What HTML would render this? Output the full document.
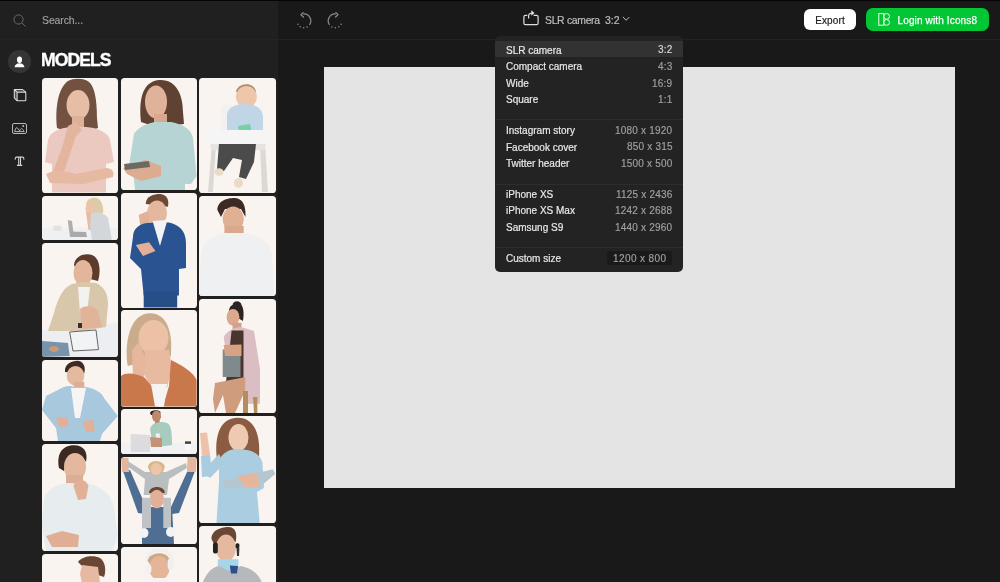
<!DOCTYPE html>
<html><head><meta charset="utf-8">
<style>
*{margin:0;padding:0;box-sizing:border-box}
html,body{width:1000px;height:582px;overflow:hidden;background:#191919;font-family:"Liberation Sans",sans-serif}
.abs,.row span{will-change:transform}
.abs{position:absolute}
#topstrip{left:0;top:0;width:1000px;height:1px;background:#050505}
#side{left:0;top:1px;width:278px;height:581px;background:#202020}
#hline{left:0;top:39px;width:1000px;height:1px;background:#232323}
#search{left:42px;top:14px;font-size:10.5px;color:#a0a0a0;letter-spacing:-0.12px;-webkit-text-stroke:0.15px #a0a0a0}
#models{left:41px;top:50px;font-size:17.6px;font-weight:bold;color:#fff;letter-spacing:-0.95px;-webkit-text-stroke:0.35px #fff}
#canvas{left:324px;top:67px;width:631px;height:420.5px;background:#e4e4e4}
.card{position:absolute;background:#f9f4ef;border-radius:3.6px;overflow:hidden}
.btn-export{left:804px;top:9px;width:52px;height:21px;background:#fff;border-radius:6px;color:#1c1c1c;font-size:10px;text-align:center;line-height:23px;letter-spacing:0.12px;-webkit-text-stroke:0.2px #1c1c1c}
.btn-login{left:866px;top:8px;width:123px;height:23px;background:#03c634;border-radius:7px;color:#fff;font-size:10px;line-height:25px;letter-spacing:0.14px;-webkit-text-stroke:0.25px #fff}
#slr{left:545px;top:14.6px;font-size:10.4px;color:#bdbdbd;letter-spacing:-0.3px;word-spacing:0px;-webkit-text-stroke:0.2px #bdbdbd}
#dd{left:495px;top:36px;width:188px;height:235.5px;background:#232323;border-radius:5px}
.row{position:absolute;left:0;width:188px;height:16.5px;font-size:10px;color:#e8e8e8}
.row .l{position:absolute;left:11.3px;top:3.6px;-webkit-text-stroke:0.2px #e8e8e8}
.row .r{position:absolute;right:10.5px;top:3.4px;color:#a0a0a0;letter-spacing:0.2px;-webkit-text-stroke:0.15px #a0a0a0}
.sep{position:absolute;left:0;width:188px;height:1px;background:#2d2d2d}
</style></head><body>
<div id="topstrip" class="abs"></div>
<div id="side" class="abs"></div>
<div id="hline" class="abs"></div>
<div id="canvas" class="abs"></div>

<!-- search -->
<svg class="abs" style="left:12.3px;top:12.8px" width="16" height="16" viewBox="0 0 16 16"><circle cx="6.5" cy="6.5" r="4.6" fill="none" stroke="#6a6a6a" stroke-width="1"/><line x1="9.8" y1="9.8" x2="13.5" y2="13.5" stroke="#6a6a6a" stroke-width="1"/></svg>
<div id="search" class="abs">Search...</div>

<!-- sidebar icons -->
<div class="abs" style="left:8px;top:50px;width:22.5px;height:22.5px;border-radius:50%;background:#353535"></div>
<svg class="abs" style="left:12px;top:55px" width="15" height="15" viewBox="0 0 15 15"><ellipse cx="7.5" cy="4.7" rx="2.5" ry="3.3" fill="#fff"/><path d="M2.6 12.3 C2.6 10 4.6 8.3 7.5 8.3 C10.4 8.3 12.4 10 12.4 12.3 Z" fill="#fff"/></svg>
<svg class="abs" style="left:12px;top:87px" width="16" height="16" viewBox="0 0 16 16" fill="none" stroke="#dcdcdc" stroke-width="1.05" stroke-linejoin="round"><path d="M2.3 2.6 L5.1 5.1 V13.8 L2.3 10.9 Z" fill="rgba(200,200,200,0.3)" stroke="none"/><rect x="5.1" y="5.1" width="8.7" height="8.7" rx="0.9"/><path d="M5.1 5.1 L2.3 2.6 H10.6 L13.8 5.1 M2.3 2.6 V10.9 L5.1 13.8"/></svg>
<svg class="abs" style="left:11px;top:122px" width="17" height="13" viewBox="0 0 17 13" fill="none" stroke="#b8b8b8" stroke-width="1"><rect x="1.5" y="1.5" width="14" height="10" rx="1.5"/><path d="M3.6 9.6 C4.2 7.6 5 5.6 5.7 5.6 C6.6 5.6 7.8 7.8 8.6 8.8 C9.3 7.4 10 6.5 10.5 6.5 C11.3 6.5 12.6 8.6 13.2 9.6 Z" stroke-linejoin="round"/><circle cx="12.2" cy="4" r="1" fill="#b8b8b8" stroke="none"/></svg>
<svg class="abs" style="left:13px;top:155px" width="13" height="13" viewBox="0 0 13 13" fill="none" stroke="#d4d4d4" stroke-width="1.1" stroke-linecap="round"><path d="M2.2 4.3 C2.2 3 2.5 2.1 3.2 2.1 H9.9 C10.6 2.1 10.9 3 10.9 4.3"/><path d="M5.7 2.4 V10.1 M7.5 2.4 V10.1 M4.4 10.4 H8.8"/></svg>

<div id="models" class="abs">MODELS</div>

<!-- header center -->
<svg class="abs" style="left:296.3px;top:11.8px" width="18" height="18" viewBox="0 0 18 18" fill="none" stroke="#8c8c8c" stroke-width="1.25"><path d="M7.30 2.03 A6.9 6.9 0 0 1 13.48 12.96" fill="none"/><path d="M7.1 0.7 L4.9 2.6 L7.4 5.0" fill="none" stroke-linejoin="round" stroke-linecap="round"/><g fill="#8c8c8c" stroke="none"><circle cx="11.14" cy="14.99" r="0.75"/><circle cx="7.66" cy="15.80" r="0.75"/><circle cx="4.24" cy="14.75" r="0.75"/><circle cx="1.92" cy="12.35" r="0.75"/></g></svg>
<svg class="abs" style="left:324.6px;top:11.8px;transform:scaleX(-1)" width="18" height="18" viewBox="0 0 18 18" fill="none" stroke="#8c8c8c" stroke-width="1.25"><path d="M7.30 2.03 A6.9 6.9 0 0 1 13.48 12.96" fill="none"/><path d="M7.1 0.7 L4.9 2.6 L7.4 5.0" fill="none" stroke-linejoin="round" stroke-linecap="round"/><g fill="#8c8c8c" stroke="none"><circle cx="11.14" cy="14.99" r="0.75"/><circle cx="7.66" cy="15.80" r="0.75"/><circle cx="4.24" cy="14.75" r="0.75"/><circle cx="1.92" cy="12.35" r="0.75"/></g></svg>

<svg class="abs" style="left:518px;top:6px" width="26" height="24" viewBox="0 0 26 24" fill="none" stroke="#dedede" stroke-width="1.2"><path d="M9.3 9.4 H7.4 a1.5 1.5 0 0 0 -1.5 1.5 V17.2 a1.5 1.5 0 0 0 1.5 1.5 H18.6 a1.5 1.5 0 0 0 1.5 -1.5 V10.9 a1.5 1.5 0 0 0 -1.5 -1.5 H15.6"/><path d="M10.6 12.6 V10.2 C10.6 8 12 7 14.6 7"/><path d="M13.6 4.8 L16.2 7 L13.6 9.2 Z" fill="#dedede" stroke-width="0.6"/></svg>
<div id="slr" class="abs">SLR camera</div><div class="abs" style="left:605px;top:14.4px;font-size:10.5px;color:#bdbdbd;-webkit-text-stroke:0.2px #bdbdbd">3:2</div>
<svg class="abs" style="left:620px;top:14px" width="12" height="9" viewBox="0 0 12 9" fill="none" stroke="#bdbdbd" stroke-width="1"><path d="M2.9 2.9 L6.1 6.3 L9.3 3.1"/></svg>

<div class="abs btn-export">Export</div>
<div class="abs btn-login"><svg style="position:absolute;left:11px;top:4px" width="16" height="15" viewBox="0 0 16 15" fill="none" stroke="#e8ffe8" stroke-width="1"><rect x="1.8" y="1.6" width="5" height="11.6"/><circle cx="9.6" cy="4.4" r="2.9"/><circle cx="9.6" cy="10.4" r="2.9"/></svg><span style="position:absolute;left:31.5px;top:0">Login with Icons8</span></div>

<!-- dropdown -->
<div id="dd" class="abs">
  <div class="row" style="top:5px;height:16.4px;background:#323232"><span class="l">SLR camera</span><span class="r" style="color:#d8d8d8;-webkit-text-stroke:0.15px #d8d8d8">3:2</span></div>
  <div class="row" style="top:21.6px"><span class="l">Compact camera</span><span class="r">4:3</span></div>
  <div class="row" style="top:38.2px"><span class="l">Wide</span><span class="r">16:9</span></div>
  <div class="row" style="top:54.8px"><span class="l">Square</span><span class="r">1:1</span></div>
  <div class="sep" style="top:83px"></div>
  <div class="row" style="top:85.5px"><span class="l">Instagram story</span><span class="r">1080 x 1920</span></div>
  <div class="row" style="top:102.1px"><span class="l">Facebook cover</span><span class="r">850 x 315</span></div>
  <div class="row" style="top:118.7px"><span class="l">Twitter header</span><span class="r">1500 x 500</span></div>
  <div class="sep" style="top:147.5px"></div>
  <div class="row" style="top:149.3px"><span class="l">iPhone XS</span><span class="r">1125 x 2436</span></div>
  <div class="row" style="top:165.9px"><span class="l">iPhone XS Max</span><span class="r">1242 x 2688</span></div>
  <div class="row" style="top:182.5px"><span class="l">Samsung S9</span><span class="r">1440 x 2960</span></div>
  <div class="sep" style="top:211px"></div>
  <div class="abs" style="left:112px;top:215px;width:64.5px;height:13.5px;background:#1a1a1a;border-radius:2px"></div>
  <div class="row" style="top:213.3px"><span class="l">Custom size</span><span class="r" style="right:16.7px;letter-spacing:0.4px">1200 x 800</span></div>
</div>

<!-- cards -->
<svg width="0" height="0" style="position:absolute"><defs><filter id="bl" x="-5%" y="-5%" width="110%" height="110%"><feGaussianBlur stdDeviation="0.45"/></filter></defs></svg>
<svg class="card" style="left:42px;top:78px" width="75.8" height="114.6" viewBox="0 0 75.8 114.6"><g filter="url(#bl)"><path d="M15 50 C13 30 16 10 26 3 C32 0 42 0 47 4 C54 10 55 28 55 40 L56 50 L44 54 L26 54 Z" fill="#72513f"/>
<ellipse cx="36" cy="27" rx="11.5" ry="15" fill="#e6bea6"/>
<rect x="30" y="38" width="12" height="14" fill="#ddb198"/>
<path d="M6 62 C8 54 16 50 30 49 L44 49 C56 50 66 54 68 62 L72 84 L64 86 L64 114.6 L10 114.6 L10 86 L3 84 Z" fill="#ecc9c0"/>
<path d="M10 96 L22 94 L34 58 L40 52 L34 44 L26 48 L20 70 Z" fill="#e3b59e"/>
<path d="M4 96 C10 92 22 92 34 96 L64 90 C70 90 73 94 71 99 L42 106 L8 105 Z" fill="#e5b9a2"/></g></svg>
<svg class="card" style="left:121px;top:78px" width="75.6" height="112" viewBox="0 0 75.6 112"><g filter="url(#bl)"><path d="M20 44 C18 24 20 4 38 2 C56 1 62 18 62 34 L63 46 L46 48 L26 46 Z" fill="#5f4232"/>
<ellipse cx="35" cy="24" rx="11" ry="16.5" fill="#e0b29a"/>
<rect x="33" y="36" width="13" height="12" fill="#d8a990"/>
<path d="M13 56 C18 48 28 45 34 44 L50 44 C60 46 70 50 72 60 L75.6 98 L70 106 L64 106 L64 112 L14 112 L12 92 L8 88 Z" fill="#b6d4d3"/>
<path d="M2 90 L24 82 L40 88 L40 98 L20 103 L6 96 Z" fill="#dcab90"/>
<path d="M3 86 L28 83 L29 89 L4 92 Z" fill="#6c6762"/></g></svg>
<svg class="card" style="left:199.3px;top:78px" width="76.7" height="114.6" viewBox="0 0 76.7 114.6"><g filter="url(#bl)"><path d="M9 114 L13 66 L17 66 L14 114 Z" fill="#dcd8d4"/>
<path d="M63 114 L61 66 L66 66 L69 114 Z" fill="#dcd8d4"/>
<path d="M22 30 C24 25 30 25 33 28 L36 54 L22 54 Z" fill="#f1f1f2"/>
<path d="M37 14 C38 4 56 3 57 14 Z" fill="#b08b6b"/>
<ellipse cx="47.4" cy="19" rx="10.5" ry="11" fill="#eec6aa"/>
<path d="M28 36 C30 28 38 26 47 26 C56 26 63 30 64 38 L64 56 L28 56 Z" fill="#c0d5e6"/>
<path d="M39 48 L51 46 L53 57 L41 58 Z" fill="#74cfa8"/>
<path d="M11 64 L67 64 L66 72 L12 72 Z" fill="#e6e4e2"/>
<path d="M7 52 L70 52 L70 66 L7 66 Z" fill="#f5f5f6"/>
<path d="M20 66 L57 66 L55 84 L47 101 L40 99 L43 82 L34 80 L25 93 L18 91 Z" fill="#4b4b4b"/>
<ellipse cx="20" cy="94" rx="4.5" ry="3.8" fill="#eadbc8"/>
<ellipse cx="39.5" cy="105" rx="4.5" ry="5" fill="#eadbc8"/></g></svg>
<svg class="card" style="left:42px;top:195.7px" width="75.8" height="44.8" viewBox="0 0 75.8 44.8"><g filter="url(#bl)"><rect x="0" y="31.6" width="75.8" height="13.2" fill="#eff0f1"/>
<path d="M44 9 C44 3 50 1 55 2 C60 4 62 12 61 17 L50 17 Z" fill="#dccaa8"/>
<ellipse cx="47.5" cy="13" rx="4" ry="6" fill="#ebc4aa"/>
<path d="M44 16 L49.5 17 L51 34 L46.5 34 Z" fill="#e6bba0"/>
<path d="M49 18 C54 15 62 16 66 22 L70 44.8 L50 44.8 L48 30 Z" fill="#d3d7db"/>
<path d="M25.7 24 L30 25 L32 41 L28 41 Z" fill="#aeaeb0"/>
<path d="M28.4 35.5 L44 36 L45 41 L29 41 Z" fill="#a9a9ab"/>
<rect x="11.5" y="29.6" width="8" height="5.2" fill="#e2e2e2"/></g></svg>
<svg class="card" style="left:42px;top:243px" width="75.8" height="114" viewBox="0 0 75.8 114"><g filter="url(#bl)"><path d="M0 87 L75.8 80 L75.8 114 L0 114 Z" fill="#eceef1"/>
<path d="M32 22 C33 12 44 10 50 12 C58 15 59 28 56 38 L48 36 L36 30 Z" fill="#5b3b2b"/>
<ellipse cx="41" cy="30" rx="9.5" ry="13" fill="#e3b69b"/>
<path d="M6 88 L12 70 C16 54 22 44 30 41 L40 39 L54 40 C62 44 66 50 66 62 L64 84 L40 88 Z" fill="#d9c7ab"/>
<path d="M36 44 L48 44 L45 70 L38 70 Z" fill="#f4f2ef"/>
<path d="M38 66 C42 62 52 62 56 68 L60 84 L40 86 Z" fill="#e1b499"/>
<rect x="36" y="80" width="4" height="5" fill="#333"/>
<path d="M27.7 89 L54 87 L56.5 106.6 L31 108 Z" fill="#f2f3f5" stroke="#55575a" stroke-width="0.9"/>
<path d="M0 98 L26 100 L27.7 113 L0 114 Z" fill="#7893aa"/>
<ellipse cx="12" cy="106" rx="5" ry="3" fill="#c79a78"/></g></svg>
<svg class="card" style="left:42px;top:359.8px" width="75.8" height="81" viewBox="0 0 75.8 81"><g filter="url(#bl)"><path d="M23 12 C22 4 30 0.6 36 0.8 C42 1.5 44 8 42 14 Z" fill="#3d2a22"/>
<ellipse cx="33.5" cy="15.8" rx="8.8" ry="9.8" fill="#e5b9a0"/>
<rect x="31.7" y="21.8" width="10.6" height="9.8" fill="#dcae95"/>
<path d="M16 30 C22 26 28 25 32 27 L44 27 C54 29 60 33 62 38 L75.8 56 L60 74 L58 81 L16 81 L14 68 L0 50 L4 36 Z" fill="#a7c8dd"/>
<path d="M29 28 L44 28 L38 58 L33 58 Z" fill="#f6f5f3"/>
<path d="M14 58 L25 57 L27 66 L17 67 Z" fill="#e2b099"/>
<path d="M40 61 L51 60 L53 72 L44 72 Z" fill="#e2b099"/></g></svg>
<svg class="card" style="left:42px;top:443.6px" width="75.8" height="107.2" viewBox="0 0 75.8 107.2"><g filter="url(#bl)"><path d="M17 24 C14 8 22 1.3 32 1.3 C42 1.3 46 8 44 18 L40 12 L28 12 L22 27 Z" fill="#3b2921"/>
<ellipse cx="33" cy="23" rx="11" ry="14" fill="#e4b79f"/>
<rect x="24" y="31" width="17" height="11" fill="#dcae95"/>
<path d="M2 54 C6 44 16 40 26 39 L48 40 C60 44 70 50 72 64 L75.8 92 L70 107.2 L4 107.2 L0 80 Z" fill="#e7ecef"/>
<path d="M31.5 42 C34 34 44 34 46.4 42 L44 55 L36 56 Z" fill="#e2b097"/>
<path d="M4 92 L20 87 L37 91 L36 103 L10 103 Z" fill="#e0ae95"/></g></svg>
<svg class="card" style="left:42px;top:553.6px" width="75.8" height="40" viewBox="0 0 75.8 40"><g filter="url(#bl)"><path d="M36 8 C40 2 52 1 58 4 C64 8 64 18 62 23 L56 21 L40 12 Z" fill="#6b4636"/>
<path d="M40 11 L56 13 L58 29 L40 29 L38 20 Z" fill="#e6b9a3"/></g></svg>
<svg class="card" style="left:121px;top:193px" width="75.6" height="114.5" viewBox="0 0 75.6 114.5"><g filter="url(#bl)"><path d="M24.7 11 C25 3 33 1 39 1 C47 1.5 48 8 47 13.8 Z" fill="#6d4a35"/>
<ellipse cx="36" cy="20" rx="10" ry="12.5" fill="#e4b79f"/>
<path d="M17.7 22 L27 18 L29.6 35 L20 37.5 Z" fill="#e2b19a"/>
<path d="M12 44 C12 36 18 31 26 30 L34 29.6 L48 29.6 C58 32 65 38 65 50 L65 75 L58 76 L58 102.6 L22.7 102.6 L20 76 L9 65 Z" fill="#2b5391"/>
<path d="M31.6 28 L46.4 27 L39 53 Z" fill="#f3f3f3"/>
<rect x="22.7" y="98.6" width="33.5" height="15.9" fill="#27508a"/>
<path d="M14.8 52 L28 49.3 L34.5 58 L22 63 Z" fill="#e2b097"/></g></svg>
<svg class="card" style="left:121px;top:310px" width="75.6" height="96.5" viewBox="0 0 75.6 96.5"><g filter="url(#bl)"><path d="M6.7 56 C3 30 10 3.3 29 3.3 C46 3.3 52 22 50 45 L46 56 L30 50 Z" fill="#caac8d"/>
<ellipse cx="32.5" cy="27.5" rx="15" ry="17.5" fill="#ecc1a6"/>
<path d="M24 40 L48 40 L51 58 L46 78 L30 78 L22 62 Z" fill="#e8bba0"/>
<path d="M11 40 L18 32 L25 50 L23 68 L12 70 Z" fill="#e7b79d"/>
<path d="M0 66 C4 62 16 63 24 68 L32 78 L37 96.5 L0 96.5 Z" fill="#c8784c"/>
<path d="M42 96.5 L48 76 L50 50 C62 56 72 62 75.6 70 L75.6 96.5 Z" fill="#c8784c"/>
<path d="M30 74 L46 74 L43 96.5 L34 96.5 Z" fill="#f6f4f2"/></g></svg>
<svg class="card" style="left:121px;top:409px" width="75.6" height="45" viewBox="0 0 75.6 45"><g filter="url(#bl)"><rect x="0" y="34" width="75.6" height="11" fill="#f1f1f3"/>
<path d="M29 4 C29.5 0.4 38 0.4 39.5 3 L39 6 L30 6 Z" fill="#2b201c"/>
<ellipse cx="35.5" cy="7.2" rx="4.6" ry="5.6" fill="#bd8a6c"/>
<rect x="34" y="12" width="4.7" height="12" fill="#b98467"/>
<path d="M29 20 C31 13 40 12 46 14 C50 16 51 22 51 36 L44 37 L32 38 Z" fill="#a7cbbd"/>
<rect x="34.8" y="24.5" width="4" height="8.5" fill="#f3f3f3"/>
<path d="M29 28 L41 29 L41 38 L30 38 Z" fill="#c49276"/>
<path d="M9.5 25 L29 26 L29 43 L10 43 Z" fill="#dcdcde"/>
<rect x="64" y="33" width="6" height="7.3" fill="#f8f8f8"/>
<rect x="64" y="32.4" width="6" height="2.4" fill="#3a3a3a"/></g></svg>
<svg class="card" style="left:121px;top:457px" width="75.6" height="87" viewBox="0 0 75.6 87"><g filter="url(#bl)"><path d="M2 14 L9 13 L25 50 L24 57 L17 56 Z" fill="#4f6e93"/>
<path d="M74 14 L67 13 L50 50 L51 57 L58 56 Z" fill="#4f6e93"/>
<path d="M0 0.8 L7.5 0.8 L8 15 L1 15 Z" fill="#e6b59d"/>
<path d="M75.6 0 L66.5 0 L66 15 L75 15 Z" fill="#e6b59d"/>
<path d="M21 50 L51 50 L53 87 L21 87 Z" fill="#4f6e93"/>
<path d="M7.5 4.5 L24 15 L45 15 L65 6 L66 11 L48 22 L46 38 L22.7 38 L24 22 L6 9 Z" fill="#babebf"/>
<path d="M27 10 C27 2.3 43 2.3 43.8 10 L42 15 L29 15 Z" fill="#d8b688"/>
<ellipse cx="35.2" cy="12" rx="5.6" ry="6" fill="#edc4a6"/>
<path d="M28 36 C28 28 44 28 43.8 36 Z" fill="#6b4636"/>
<ellipse cx="35.8" cy="42" rx="7.2" ry="9.2" fill="#e2b097"/>
<path d="M21 40.8 L30 40.8 L30 71 L21 71 Z" fill="#c0c3c5"/>
<path d="M42.3 40.8 L50 40.8 L50 71 L42.3 71 Z" fill="#c0c3c5"/>
<ellipse cx="23" cy="76" rx="4.5" ry="5" fill="#f3f3f3"/>
<ellipse cx="49.7" cy="75" rx="4.7" ry="5" fill="#f3f3f3"/></g></svg>
<svg class="card" style="left:121px;top:547px" width="75.6" height="40" viewBox="0 0 75.6 40"><g filter="url(#bl)"><path d="M25 14 C25 4 33 1.5 38.7 1.5 C47 1.5 52.4 6 52.4 13 L49 13 C49 8 44 4.5 38.7 4.5 C32 4.5 28 9 28 15 Z" fill="#efefef"/>
<path d="M26.6 14 C28 5 46 3 48.6 13 L47 17 L29 17 Z" fill="#cba984"/>
<ellipse cx="38.3" cy="21" rx="10.2" ry="12" fill="#e4b596"/>
<path d="M26.6 31 L47 31 L47 40 L26.6 40 Z" fill="#f4f4f4"/>
<rect x="24.3" y="17.5" width="6.1" height="9.1" rx="3" fill="#f2f2f2"/>
<rect x="46.7" y="11.4" width="6.1" height="11.4" rx="3" fill="#f0f0f0"/></g></svg>
<svg class="card" style="left:199.3px;top:195.7px" width="76.7" height="100" viewBox="0 0 76.7 100"><g filter="url(#bl)"><path d="M18.4 14 C18.4 4 30 1.7 36 2 C44 2.5 47 10 46.5 21 L42 13 L26 13 L22 21 Z" fill="#3c2a22"/>
<ellipse cx="34.2" cy="23" rx="10.5" ry="12.5" fill="#dfb094"/>
<rect x="25.4" y="30" width="19.3" height="10" fill="#daa98d"/>
<path d="M2 58 C4 46 12 40 26 37 L46 37 C60 40 70 44 73 58 L75 100 L0 100 Z" fill="#eff0f1"/></g></svg>
<svg class="card" style="left:199.3px;top:298.7px" width="76.7" height="114.1" viewBox="0 0 76.7 114.1"><g filter="url(#bl)"><path d="M33.6 6 C34 1 42 1 42.5 6 C45 10 45 16 44 22 L30 14 C30 9 31 7 33.6 6 Z" fill="#2e2320"/>
<ellipse cx="34" cy="18.3" rx="6.4" ry="8.4" fill="#dba98d"/>
<rect x="33.6" y="23.7" width="8.9" height="9" fill="#d6a085"/>
<path d="M24.7 38 C28 32 36 28 42 28 L55 32 L61 70 L61 104.7 L46 104.7 L46 82 L30 72 Z" fill="#dbbdc4"/>
<path d="M32.6 31.6 L44.5 31.6 L44.5 83 L27 83 Z" fill="#4a352d"/>
<path d="M23.7 50.4 L41.5 50.4 L41.5 78 L23.7 78 Z" fill="#808a8c"/>
<path d="M24.7 46 L42.5 45.5 L42.5 57 L26 57 Z" fill="#d8a286"/>
<path d="M16 84 L46.4 78 L46 92 L36 114.1 L27 114.1 L24 96 L16 114.1 L14 100 Z" fill="#cf9d7d"/>
<path d="M44 92 L49 92 L49 114.1 L44 114.1 Z" fill="#b88b5d"/>
<path d="M54 98 L58.3 98 L58.3 114.1 L55 114.1 Z" fill="#b88b5d"/></g></svg>
<svg class="card" style="left:199.3px;top:416px" width="76.7" height="107" viewBox="0 0 76.7 107"><g filter="url(#bl)"><path d="M19 50 C14 22 20 1.8 39 1.8 C56 1.8 62 20 60 42 L60.7 55 L46 44 L28 52 Z" fill="#8b5c42"/>
<ellipse cx="39.5" cy="21.5" rx="10" ry="13.5" fill="#efcab3"/>
<path d="M20 44 C24 36 32 33 38 33 C50 33 60 36 63.4 46 L65 72 L58 76 L60.7 107 L17.5 107 L20 66 Z" fill="#aacde2"/>
<path d="M2 40 L11 38 L13 60 L3 61 Z" fill="#a9cce1"/>
<path d="M3 56 L20 38 L25 48 L11 62 Z" fill="#a9cce1"/>
<path d="M1 17 L8 16.5 L11 38 L3 40 Z" fill="#edc2a9"/>
<path d="M24 65 L74 53.3 L76.3 58 L62 70 L27 72.6 Z" fill="#b6c6cf"/>
<path d="M38.6 60 L58 57 L60.7 71.7 L46 71 Z" fill="#e5b69c"/></g></svg>
<svg class="card" style="left:199.3px;top:526px" width="76.7" height="60" viewBox="0 0 76.7 60"><g filter="url(#bl)"><path d="M12.5 13 C12.5 3 24 1 30 1 C38 1.5 38 10 36.6 16.4 L33 12 L20 13 L17 22 Z" fill="#6b4634"/>
<ellipse cx="27" cy="22" rx="10" ry="13.5" fill="#e5b8a0"/>
<rect x="14" y="16.4" width="4.8" height="11" rx="2" fill="#232323"/>
<rect x="36.6" y="17.3" width="3.8" height="5" rx="1.5" fill="#232323"/>
<path d="M37.5 22 L40.4 22 L40 30 L38 30 Z" fill="#333"/>
<path d="M18.8 33.2 L39.5 33.2 L39.5 45.2 L18.8 45.2 Z" fill="#a9d5ea"/>
<path d="M3.9 56 C8 46 14 41 20 40 L30 45 L42 40 C52 42 60 48 62.6 56 L64 60 L3 60 Z" fill="#b6b9bb"/>
<path d="M30.8 39.5 L39 40 L38 47.6 L32 47.6 Z" fill="#2f4f8b"/></g></svg>
<!-- /cards -->
<!-- /cards -->
<!-- /cards -->
<!-- /cards -->
<!-- /cards -->
<!-- /cards -->
<!-- /cards -->
<!-- /cards -->
<!-- /cards -->
</body></html>
